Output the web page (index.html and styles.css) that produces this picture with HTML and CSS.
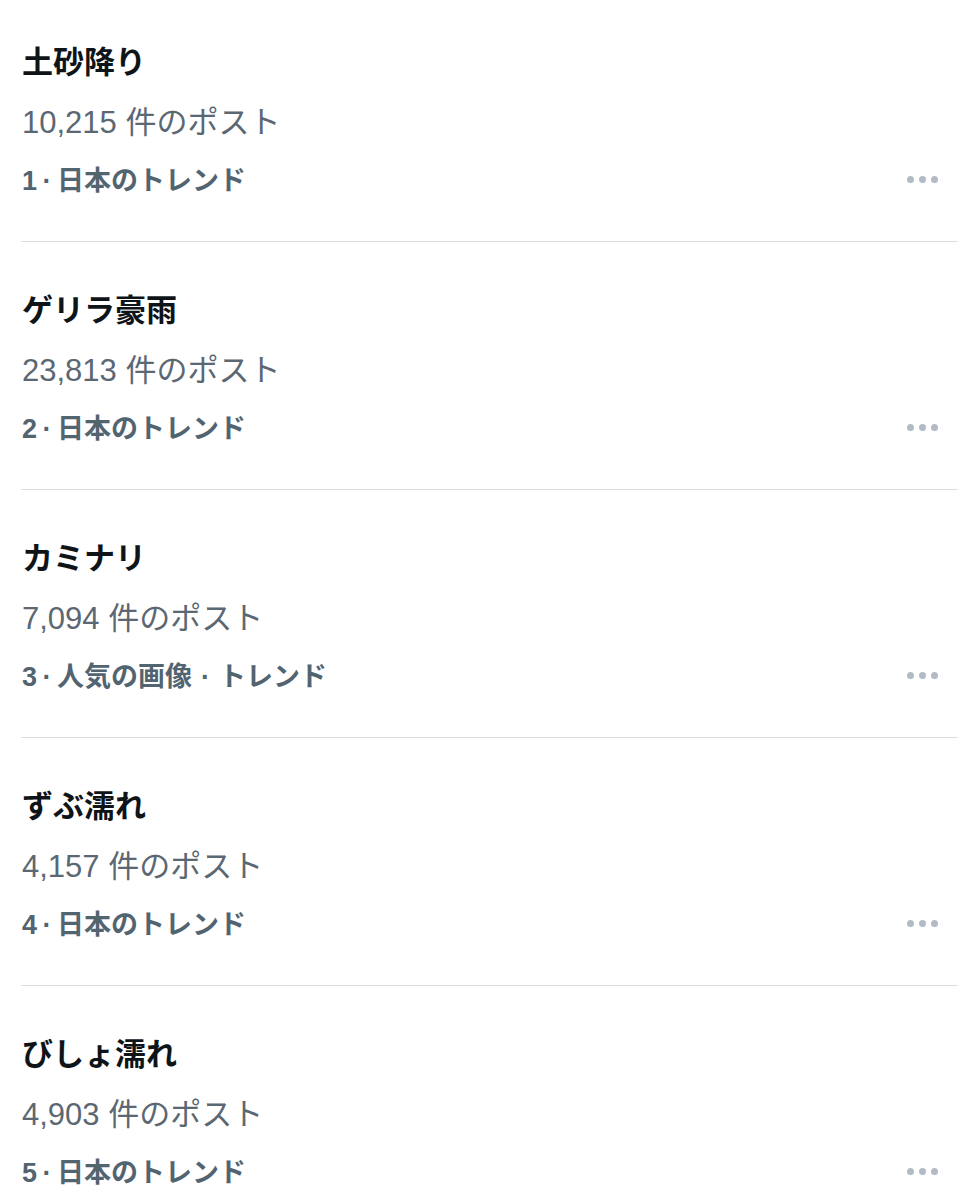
FILE: index.html
```html
<!DOCTYPE html>
<html lang="ja">
  <head>
    <meta charset="UTF-8" />
    <meta name="viewport" content="width=device-width, initial-scale=1.0" />
    <title>トレンド</title>
    <link rel="stylesheet" href="styles.css">
  </head>
  <body>
    <div class="trends">
      <div class="trend">
        <div class="trend-name">土砂降り</div>
        <div class="trend-count">10,215 件のポスト</div>
        <div class="trend-meta">
          <span>1 · 日本のトレンド</span>
          <span class="more"><i></i><i></i><i></i></span>
        </div>
      </div>
      <div class="trend">
        <div class="trend-name">ゲリラ豪雨</div>
        <div class="trend-count">23,813 件のポスト</div>
        <div class="trend-meta">
          <span>2 · 日本のトレンド</span>
          <span class="more"><i></i><i></i><i></i></span>
        </div>
      </div>
      <div class="trend">
        <div class="trend-name">カミナリ</div>
        <div class="trend-count">7,094 件のポスト</div>
        <div class="trend-meta">
          <span>3 · 人気の画像<span class="sep">·</span>トレンド</span>
          <span class="more"><i></i><i></i><i></i></span>
        </div>
      </div>
      <div class="trend">
        <div class="trend-name">ずぶ濡れ</div>
        <div class="trend-count">4,157 件のポスト</div>
        <div class="trend-meta">
          <span>4 · 日本のトレンド</span>
          <span class="more"><i></i><i></i><i></i></span>
        </div>
      </div>
      <div class="trend">
        <div class="trend-name">びしょ濡れ</div>
        <div class="trend-count">4,903 件のポスト</div>
        <div class="trend-meta">
          <span>5 · 日本のトレンド</span>
          <span class="more"><i></i><i></i><i></i></span>
        </div>
      </div>
    </div>
  </body>
</html>
```

FILE: styles.css
```css
body {
  margin: 0;
  background: #ffffff;
  font-family: "Noto Sans CJK JP", "Noto Sans", sans-serif;
  color: #0f1419;
}

.trends {
  padding: 0 22px 0 21px;
}

.trend {
  padding: 39px 0 31px 1px;
  border-bottom: 1px solid #dcdfe2;
}

.trend:first-child {
  padding-top: 33px;
}

.trend:last-child {
  border-bottom: none;
}

.trend-name {
  font-size: 31px;
  font-weight: 700;
  line-height: 54px;
  margin-bottom: 4px;
}

.trend-count {
  font-family: "Liberation Sans", "Noto Sans CJK JP", sans-serif;
  font-size: 31px;
  line-height: 58px;
  padding-top: 3px;
  color: #5b6873;
}

.trend-meta {
  display: flex;
  justify-content: space-between;
  align-items: center;
  font-family: "Liberation Sans", "Noto Sans CJK JP", sans-serif;
  font-size: 27px;
  font-weight: 700;
  line-height: 58px;
  word-spacing: -2px;
  color: #536471;
}

.sep {
  margin: 0 9px;
}

.more {
  display: flex;
  gap: 5px;
  margin: 0 20px 3px 0;
}

.more i {
  width: 7px;
  height: 7px;
  border-radius: 50%;
  background: #b1bcc6;
}
```
